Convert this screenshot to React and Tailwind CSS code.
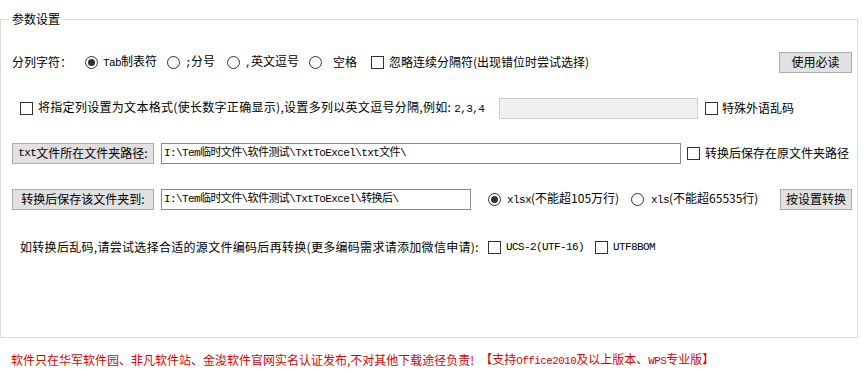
import React from "react";

const mono = "font-['Liberation_Mono','Noto_Sans_CJK_SC',monospace] text-[11px] tracking-[-0.6px]";

const Radio = ({ checked }) => (
    <span className="w-[13px] h-[13px] rounded-full border border-[#333333] bg-white flex items-center justify-center shrink-0">
        {checked && <span className="w-[7px] h-[7px] rounded-full bg-[#333333]" />}
    </span>
);

const Check = () => <span className="w-[13px] h-[13px] border border-[#333333] bg-white shrink-0" />;

const Button = ({ className, children }) => (
    <div
        className={
            "h-[21px] flex items-center justify-center bg-[#e1e1e1] border border-[#adadad] whitespace-nowrap shrink-0 " +
            className
        }
    >
        {children}
    </div>
);

const App = () => {
    return (
        <div className="w-[863px] h-[376px] bg-white text-black text-[12px] leading-[14px] font-['Noto_Sans_CJK_SC',sans-serif] overflow-hidden">
            <div className="relative mt-[19px] w-[858px] h-[319px] border border-[#dcdcdc]">
                <div className="absolute left-[8px] top-[-8px] bg-white px-[3px]">参数设置</div>

                {/* row 1 */}
                <div className="flex items-center h-[22px] mt-[31px] whitespace-nowrap">
                    <span className="ml-[11px] w-[73px]">分列字符：</span>
                    <div className="w-[82px] flex items-center gap-[5px]">
                        <Radio checked />
                        <span>
                            <span className={mono}>Tab</span>制表符
                        </span>
                    </div>
                    <div className="w-[60px] flex items-center gap-[5px]">
                        <Radio />
                        <span>
                            <span className={mono}>;</span>分号
                        </span>
                    </div>
                    <div className="w-[82px] flex items-center gap-[5px]">
                        <Radio />
                        <span>
                            <span className={mono}>,</span>英文逗号
                        </span>
                    </div>
                    <div className="w-[62px] flex items-center gap-[11px]">
                        <Radio />
                        <span>空格</span>
                    </div>
                    <div className="flex items-center gap-[5px]">
                        <Check />
                        <span>忽略连续分隔符(出现错位时尝试选择)</span>
                    </div>
                    <Button className="ml-auto mr-[5px] w-[73px]">使用必读</Button>
                </div>

                {/* row 2 */}
                <div className="flex items-center h-[22px] mt-[24px] whitespace-nowrap">
                    <div className="ml-[19px] w-[479px] flex items-center gap-[5px]">
                        <Check />
                        <span className="tracking-[0.3px]">
                            将指定列设置为文本格式(使长数字正确显示),设置多列以英文逗号分隔,例如:{" "}
                            <span className={mono}>2,3,4</span>
                        </span>
                    </div>
                    <div className="w-[199px] h-[21px] bg-[#f0f0f0] border border-[#cfcfcf] shrink-0" />
                    <div className="ml-[7px] flex items-center gap-[4px]">
                        <Check />
                        <span>特殊外语乱码</span>
                    </div>
                </div>

                {/* row 3 */}
                <div className="flex items-center h-[22px] mt-[23px] whitespace-nowrap">
                    <Button className="ml-[11px] w-[142px]">
                        <span className={mono}>txt</span>文件所在文件夹路径:
                    </Button>
                    <div className={"ml-[7px] w-[520px] h-[21px] border border-[#8a8a8a] flex items-center pl-[2px] " + mono}>
                        I:\Tem临时文件\软件测试\TxtToExcel\txt文件\
                    </div>
                    <div className="ml-[6px] flex items-center gap-[5px]">
                        <Check />
                        <span>转换后保存在原文件夹路径</span>
                    </div>
                </div>

                {/* row 4 */}
                <div className="flex items-center h-[22px] mt-[24px] whitespace-nowrap">
                    <Button className="ml-[11px] w-[142px]">转换后保存该文件夹到:</Button>
                    <div className={"ml-[7px] w-[310px] h-[21px] border border-[#8a8a8a] flex items-center pl-[2px] " + mono}>
                        I:\Tem临时文件\软件测试\TxtToExcel\转换后\
                    </div>
                    <div className="ml-[17px] w-[143px] flex items-center gap-[6px]">
                        <Radio checked />
                        <span>
                            <span className={mono}>xlsx</span>(不能超105万行)
                        </span>
                    </div>
                    <div className="flex items-center gap-[7px]">
                        <Radio />
                        <span>
                            <span className={mono}>xls</span>(不能超65535行)
                        </span>
                    </div>
                    <Button className="ml-auto mr-[5px] w-[72px]">按设置转换</Button>
                </div>

                {/* row 5 */}
                <div className="flex items-center h-[22px] mt-[26px] whitespace-nowrap">
                    <span className="ml-[19px] w-[468px] tracking-[0.3px]">
                        如转换后乱码,请尝试选择合适的源文件编码后再转换(更多编码需求请添加微信申请):
                    </span>
                    <div className="w-[107px] flex items-center gap-[5px]">
                        <Check />
                        <span className={mono}>UCS-2(UTF-16)</span>
                    </div>
                    <div className="flex items-center gap-[5px]">
                        <Check />
                        <span className={mono}>UTF8BOM</span>
                    </div>
                </div>
            </div>

            {/* footer */}
            <div className="mt-[14px] h-[16px] pl-[11px] flex items-center whitespace-nowrap text-[#e00000]">
                软件只在华军软件园、非凡软件站、金浚软件官网实名认证发布,不对其他下载途径负责!{" "}
                <span className="ml-[6px]">
                    【支持<span className={mono}>Office2010</span>及以上版本、<span className={mono}>WPS</span>专业版】
                </span>
            </div>
        </div>
    );
};

export default App;
